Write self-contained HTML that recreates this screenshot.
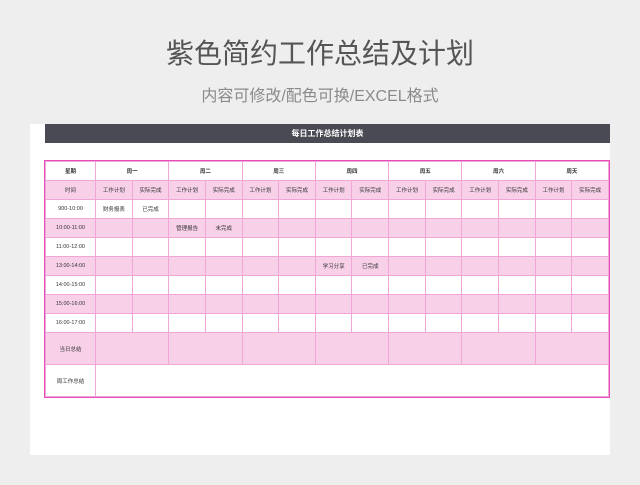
<!DOCTYPE html>
<html><head><meta charset="utf-8"><style>
*{margin:0;padding:0;box-sizing:border-box}
body{width:640px;height:485px;background:#eeeeee;position:relative;overflow:hidden;font-family:"Liberation Sans","Noto Sans CJK SC",sans-serif}
.t1{position:absolute;top:36px;left:0;width:640px;text-align:center;font-size:28px;color:#555;line-height:36px}
.t2{position:absolute;top:87px;left:0;width:640px;text-align:center;font-size:16px;color:#8a8a8a;line-height:20px}
.card{position:absolute;left:30px;top:124px;width:580px;height:331px;background:#fff}
.bar{position:absolute;left:45px;top:124px;width:565px;height:19px;background:#4a4a55;color:#fff;font-size:8px;font-weight:bold;text-align:center;line-height:19px}
table{position:absolute;left:45px;top:161px;width:564px;border-collapse:collapse;table-layout:fixed;outline:1px solid #e64ebe;outline-offset:0}
td{border:1px solid #f2a6d6;font-size:5.5px;color:#333;text-align:center;height:19px;padding:0;white-space:nowrap;overflow:hidden}
tr.p td{background:#f8d1e9}
tr.b td{font-weight:bold}
tr.tall td{height:32px}
</style></head><body>
<div class="t1">紫色简约工作总结及计划</div>
<div class="t2">内容可修改/配色可换/EXCEL格式</div>
<div class="card"></div>
<div class="bar">每日工作总结计划表</div>
<table>
<colgroup><col style="width:50px"><col><col><col><col><col><col><col><col><col><col><col><col><col><col></colgroup>
<tr class="b"><td>星期</td><td colspan="2">周一</td><td colspan="2">周二</td><td colspan="2">周三</td><td colspan="2">周四</td><td colspan="2">周五</td><td colspan="2">周六</td><td colspan="2">周天</td></tr>
<tr class="p"><td>时间</td><td>工作计划</td><td>实际完成</td><td>工作计划</td><td>实际完成</td><td>工作计划</td><td>实际完成</td><td>工作计划</td><td>实际完成</td><td>工作计划</td><td>实际完成</td><td>工作计划</td><td>实际完成</td><td>工作计划</td><td>实际完成</td></tr>
<tr><td>900-10:00</td><td>财务报表</td><td>已完成</td><td></td><td></td><td></td><td></td><td></td><td></td><td></td><td></td><td></td><td></td><td></td><td></td></tr>
<tr class="p"><td>10:00-11:00</td><td></td><td></td><td>管理报告</td><td>未完成</td><td></td><td></td><td></td><td></td><td></td><td></td><td></td><td></td><td></td><td></td></tr>
<tr><td>11:00-12:00</td><td></td><td></td><td></td><td></td><td></td><td></td><td></td><td></td><td></td><td></td><td></td><td></td><td></td><td></td></tr>
<tr class="p"><td>13:00-14:00</td><td></td><td></td><td></td><td></td><td></td><td></td><td>学习分享</td><td>已完成</td><td></td><td></td><td></td><td></td><td></td><td></td></tr>
<tr><td>14:00-15:00</td><td></td><td></td><td></td><td></td><td></td><td></td><td></td><td></td><td></td><td></td><td></td><td></td><td></td><td></td></tr>
<tr class="p"><td>15:00-16:00</td><td></td><td></td><td></td><td></td><td></td><td></td><td></td><td></td><td></td><td></td><td></td><td></td><td></td><td></td></tr>
<tr><td>16:00-17:00</td><td></td><td></td><td></td><td></td><td></td><td></td><td></td><td></td><td></td><td></td><td></td><td></td><td></td><td></td></tr>
<tr class="p tall"><td>当日总结</td><td colspan="2"></td><td colspan="2"></td><td colspan="2"></td><td colspan="2"></td><td colspan="2"></td><td colspan="2"></td><td colspan="2"></td></tr>
<tr class="tall"><td>周工作总结</td><td colspan="14"></td></tr>
</table>
</body></html>
